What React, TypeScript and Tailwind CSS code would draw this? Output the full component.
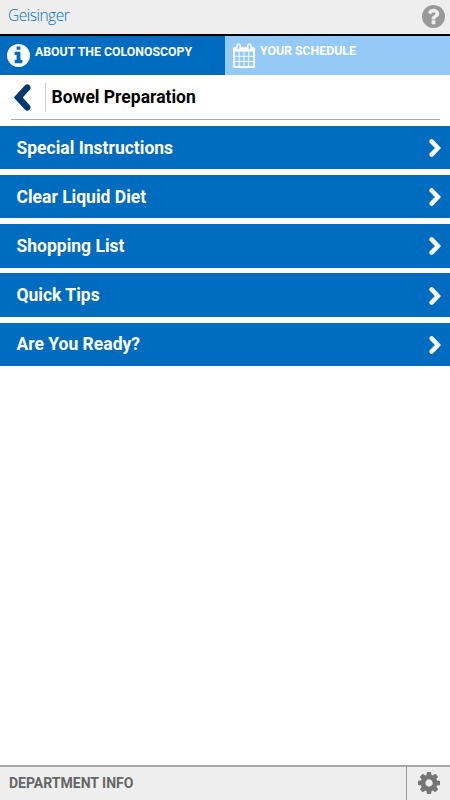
import { useState } from "react";

const sections = [
  "Special Instructions",
  "Clear Liquid Diet",
  "Shopping List",
  "Quick Tips",
  "Are You Ready?",
];

function InfoIcon({ className }: { className?: string }) {
  return (
    <svg viewBox="128 128 1536 1536" fill="currentColor" className={className}>
      <path d="M1152 1376v-160q0-14-9-23t-23-9h-96v-512q0-14-9-23t-23-9h-320q-14 0-23 9t-9 23v160q0 14 9 23t23 9h96v320h-96q-14 0-23 9t-9 23v160q0 14 9 23t23 9h448q14 0 23-9t9-23zm-128-896v-160q0-14-9-23t-23-9h-192q-14 0-23 9t-9 23v160q0 14 9 23t23 9h192q14 0 23-9t9-23zm640 416q0 209-103 385.500t-279.500 279.500-385.500 103-385.500-103-279.500-279.500-103-385.500 103-385.500 279.500-279.500 385.500-103 385.500 103 279.500 279.500 103 385.500z" />
    </svg>
  );
}

function HelpIcon({ className }: { className?: string }) {
  return (
    <svg viewBox="128 128 1536 1536" fill="currentColor" className={className}>
      <path d="M1024 1376v-192q0-14-9-23t-23-9h-192q-14 0-23 9t-9 23v192q0 14 9 23t23 9h192q14 0 23-9t9-23zm256-672q0-88-55.500-163t-138.500-116-170-41q-243 0-371 213-15 24 8 42l132 100q7 6 19 6 16 0 25-12 53-68 86-92 34-24 86-24 48 0 85.500 26t37.500 59q0 38-20 61t-68 45q-63 28-115.500 86.500t-52.500 125.500v36q0 14 9 23t23 9h192q14 0 23-9t9-23q0-19 21.500-49.500t54.500-49.500q32-18 49-28.500t46-35 44.500-48 28-60.500 12.500-81zm384 192q0 209-103 385.500t-279.500 279.500-385.500 103-385.500-103-279.500-279.500-103-385.500 103-385.500 279.500-279.500 385.500-103 385.500 103 279.500 279.500 103 385.500z" />
    </svg>
  );
}

function CogIcon({ className }: { className?: string }) {
  return (
    <svg viewBox="128 128 1536 1536" fill="currentColor" className={className}>
      <path d="M1152 896q0-106-75-181t-181-75-181 75-75 181 75 181 181 75 181-75 75-181zm512-109v222q0 12-8 23t-20 13l-185 28q-19 54-39 91 35 50 107 138 10 12 10 25t-9 23q-27 37-99 108t-94 71q-12 0-26-9l-138-108q-44 23-91 38-16 136-29 186-7 28-36 28h-222q-14 0-24.500-8.500t-11.500-21.500l-28-184q-49-16-90-37l-141 107q-10 9-25 9-14 0-25-11-126-114-165-168-7-10-7-23 0-12 8-23 15-21 51-66.500t54-70.500q-27-50-41-99l-183-27q-13-2-21-12.500t-8-23.500v-222q0-12 8-23t19-13l186-28q14-46 39-92-40-57-107-138-10-12-10-24 0-10 9-23 26-36 98.500-107.500t94.500-71.500q13 0 26 10l138 107q44-23 91-38 16-136 29-186 7-28 36-28h222q14 0 24.500 8.500t11.500 21.500l28 184q49 16 90 37l142-107q9-9 24-9 13 0 25 10 129 119 165 170 7 8 7 22 0 12-8 23-15 21-51 66.500t-54 70.500q26 50 41 98l183 28q13 2 21 12.500t8 23.500z" />
    </svg>
  );
}

function CalendarIcon({ className }: { className?: string }) {
  return (
    <svg viewBox="0 0 22 25" className={className}>
      <rect x="0" y="4" width="22" height="21" rx="1.500" fill="#fff" />
      <g fill="#95caf7">
        {[8.600, 13.700, 18.800].map((y) =>
          [1.800, 6.600, 11.400, 16.200].map((x) => (
            <rect key={`${x}-${y}`} x={x} y={y} width="3.900" height="4.200" />
          ))
        )}
      </g>
      <g fill="#95caf7" stroke="#fff" strokeWidth="1.500">
        <rect x="3.900" y="1.200" width="3.400" height="6" rx="1.700" />
        <rect x="14.700" y="1.200" width="3.400" height="6" rx="1.700" />
      </g>
    </svg>
  );
}

export default function App() {
  const [active, setActive] = useState<string | null>(null);

  return (
    <div className="flex flex-col w-[450px] h-[800px] bg-white font-['Roboto',sans-serif] overflow-hidden">
      <header className="flex items-start justify-between h-9 shrink-0 bg-[#eeeeee] border-b-2 border-black pl-2 pr-[5px]">
        <span className="mt-[5px] text-[15.500px] leading-5 font-light tracking-[-0.5px] text-[#0070c0] font-['Open_Sans',sans-serif]">
          Geisinger
        </span>
        <button className="mt-[5px] text-[#999999]">
          <HelpIcon className="w-[23px] h-[23px]" />
        </button>
      </header>

      <nav className="flex h-[39px] shrink-0 text-[12.300px] leading-4 font-bold text-white">
        <button className="flex items-start w-[225px] bg-[#006cc0] pl-[7px] pt-2">
          <InfoIcon className="w-[23px] h-[23px]" />
          <span className="ml-[5px]">ABOUT THE COLONOSCOPY</span>
        </button>
        <button className="flex items-start flex-1 bg-[#95caf7] pl-2 pt-[7px]">
          <CalendarIcon className="w-[22px] h-[25px]" />
          <span className="ml-[5px]">YOUR SCHEDULE</span>
        </button>
      </nav>

      <div className="flex items-center h-[45px] shrink-0 ml-[11px] mr-[10px] border-b border-[#a9a9a9]">
        <button className="ml-[3px] text-[#003a70]">
          <svg viewBox="0 0 17 27" fill="none" stroke="currentColor" strokeWidth="6.500" strokeLinecap="round" className="w-[17px] h-[27px]">
            <path d="M13.200 3.700L4.200 13.500L13.200 23.300" />
          </svg>
        </button>
        <div className="w-px h-[29px] ml-[14px] bg-[#cccccc]" />
        <h1 className="ml-[5.500px] text-[17.500px] leading-6 font-bold text-black">
          Bowel Preparation
        </h1>
      </div>

      <main className="flex flex-col flex-1 gap-[5.700px] mt-[5.800px]">
        {sections.map((title) => (
          <button
            key={title}
            onClick={() => setActive(title)}
            aria-current={active === title}
            className="flex items-center justify-between h-[43.500px] bg-[#006cc0] pl-[16.500px] pr-[9px] text-white"
          >
            <span className="text-[17.500px] leading-6 font-bold">{title}</span>
            <svg viewBox="0 0 12 18" fill="none" stroke="currentColor" strokeWidth="4.400" strokeLinecap="round" className="w-3 h-[18px] mt-px">
              <path d="M2.600 2.400L9 9L2.600 15.600" />
            </svg>
          </button>
        ))}
      </main>

      <footer className="flex h-[35px] shrink-0 bg-[#eeeeee] border-t-2 border-[#a6a6a6] text-[#666666]">
        <button className="flex items-center flex-1 pl-[9px] pb-0.5 text-sm font-bold">
          DEPARTMENT INFO
        </button>
        <button className="flex items-center justify-center w-11 pb-px border-l border-[#999999] text-[#757575]">
          <CogIcon className="w-[22px] h-[22px]" />
        </button>
      </footer>
    </div>
  );
}
